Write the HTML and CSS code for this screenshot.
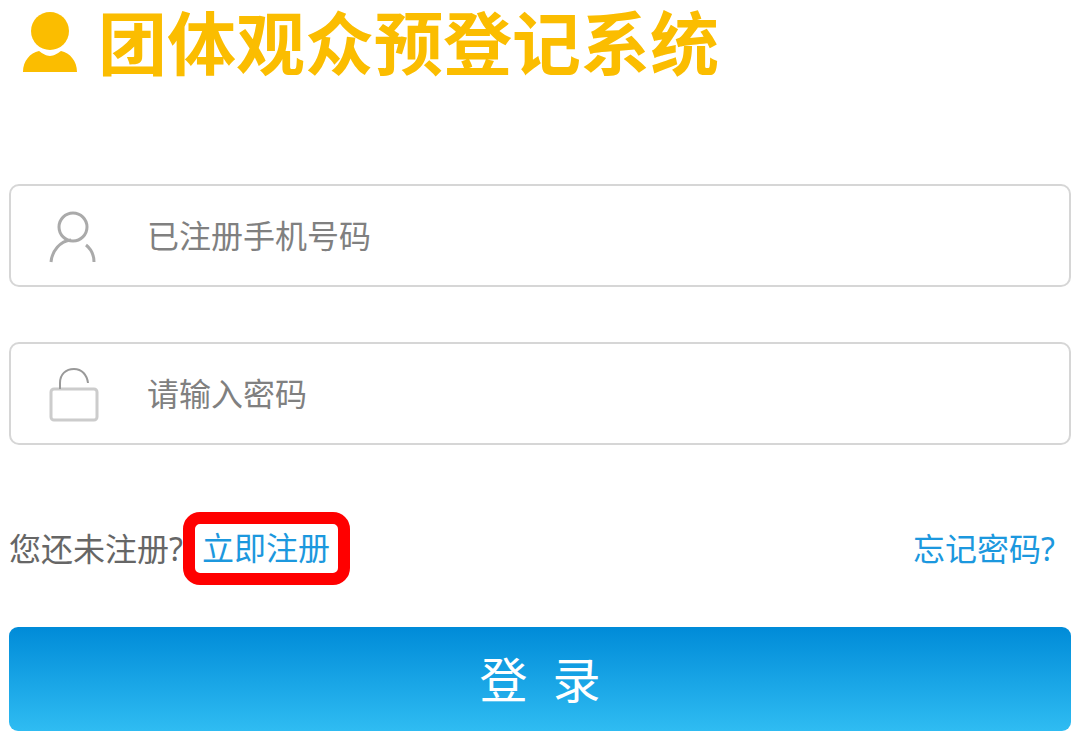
FILE: index.html
```html
<!DOCTYPE html>
<html lang="zh-CN">
<head>
  <meta charset="UTF-8">
  <meta name="viewport" content="width=device-width, initial-scale=1.0">
  <title>团体观众预登记系统</title>
  <link rel="stylesheet" href="styles.css">
</head>
<body>
  <div class="login">
    <header class="login-header">
      <svg class="logo" viewBox="0 0 56 62" aria-hidden="true">
        <circle cx="28" cy="20" r="19"/>
        <path d="M1 61C1 50 8 42 17 40C20 42 24 45 28 45C32 45 36 42 39 40C48 42 55 50 55 61Z"/>
      </svg>
      <h1>团体观众预登记系统</h1>
    </header>

    <form class="login-form">
      <div class="field">
        <label for="phone" aria-label="手机号码">
          <svg class="icon" viewBox="0 0 50 56">
            <circle cx="24" cy="19" r="14"/>
            <path d="M2 54C3 43 11 33 22 32M37 37C42 41 45 47 45 54"/>
          </svg>
        </label>
        <input type="text" id="phone" placeholder="已注册手机号码">
      </div>

      <div class="field">
        <label for="password" aria-label="密码">
          <svg class="icon" viewBox="0 0 50 56">
            <rect class="lock-body" x="2" y="23" width="46" height="31" rx="3"/>
            <path class="lock-arc" d="M11 23V17C11 8 17 3 25 3C33 3 38 9 39 17"/>
          </svg>
        </label>
        <input type="password" id="password" placeholder="请输入密码">
      </div>

      <div class="links">
        <div class="register">
          <span>您还未注册?</span>
          <a href="#" class="register-link">立即注册</a>
        </div>
        <a href="#" class="forgot">忘记密码?</a>
      </div>

      <button type="submit">登&nbsp;&nbsp;录</button>
    </form>
  </div>
</body>
</html>
```
FILE: styles.css
```css
* {
  box-sizing: border-box;
  margin: 0;
  padding: 0;
}

body {
  background: #fff;
  color: #666;
  font-family: "Noto Sans", "Noto Sans CJK SC", sans-serif;
  font-size: 32px;
}

.login {
  padding: 0 9px 10px;
}

.login-header {
  display: flex;
  align-items: flex-start;
  gap: 20px;
  padding-left: 13px;
}

.logo {
  flex: none;
  width: 56px;
  height: 62px;
  margin-top: 11px;
  fill: #fbbd00;
}

h1 {
  color: #fbbd00;
  font-family: "Liberation Sans", "Noto Sans CJK SC", sans-serif;
  font-size: 69px;
  line-height: 94px;
  font-weight: bold;
  white-space: nowrap;
}

.login-form {
  margin-top: 90px;
}

.field {
  display: flex;
  align-items: center;
  height: 103px;
  margin-bottom: 55px;
  padding-left: 38px;
  border: 2px solid #d6d6d6;
  border-radius: 10px;
}

.field label {
  display: flex;
  flex: none;
}

.icon {
  width: 50px;
  height: 56px;
  fill: none;
  stroke: #aaa;
  stroke-width: 3;
}

.lock-body {
  stroke: #ccc;
}

.lock-arc {
  stroke: #999;
  stroke-width: 2;
}

.field input {
  flex: 1;
  min-width: 0;
  height: 100%;
  margin-left: 48px;
  border: none;
  outline: none;
  background: none;
  color: #555;
  font: inherit;
}

.field input::placeholder {
  color: #808080;
  opacity: 1;
}

.links {
  display: flex;
  align-items: center;
  justify-content: space-between;
  height: 73px;
  margin: 67px 0 42px;
  padding-right: 16px;
  line-height: 48px;
}

.register {
  display: flex;
  align-items: center;
}

.links a {
  color: #1c98de;
  text-decoration: none;
}

.register-link {
  padding: 0 8px 1px 7px;
  border: 12px solid #f00;
  border-radius: 17px;
}

button {
  display: block;
  width: 100%;
  height: 104px;
  padding-bottom: 4px;
  border: none;
  border-radius: 9px;
  background: linear-gradient(#008bd8, #2fbcf2);
  color: #fff;
  font-family: inherit;
  font-size: 48px;
  cursor: pointer;
}
```
